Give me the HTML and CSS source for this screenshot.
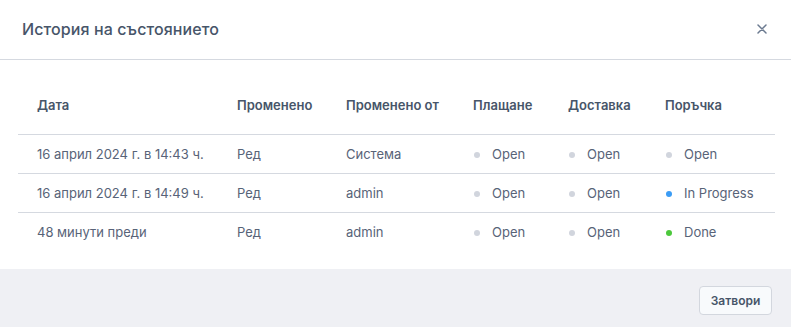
FILE: index.html
```html
<!DOCTYPE html>
<html>
<head>
    <meta charset="UTF-8">
    <title>История на състоянието</title>
    <link rel="stylesheet" href="styles.css">
</head>
<body>
<div class="modal">
    <div class="modal-head">
        <h2 class="modal-title">История на състоянието</h2>
        <button class="close" type="button">
            <svg width="10" height="10" viewBox="0 0 10 10"><path d="M1 1L9 9M9 1L1 9" stroke="#6b7a90" stroke-width="1.5" stroke-linecap="round"/></svg>
        </button>
    </div>
    <div class="modal-body">
        <table class="history">
            <thead>
            <tr>
                <th class="c-date">Дата</th>
                <th class="c-by">Променено</th>
                <th class="c-user">Променено от</th>
                <th class="c-pay">Плащане</th>
                <th class="c-ship">Доставка</th>
                <th class="c-order">Поръчка</th>
            </tr>
            </thead>
            <tbody>
            <tr>
                <td>16 април 2024 г. в 14:43 ч.</td>
                <td>Ред</td>
                <td>Система</td>
                <td><span class="dot"></span>Open</td>
                <td><span class="dot"></span>Open</td>
                <td><span class="dot"></span>Open</td>
            </tr>
            <tr>
                <td>16 април 2024 г. в 14:49 ч.</td>
                <td>Ред</td>
                <td>admin</td>
                <td><span class="dot"></span>Open</td>
                <td><span class="dot"></span>Open</td>
                <td><span class="dot blue"></span>In Progress</td>
            </tr>
            <tr>
                <td>48 минути преди</td>
                <td>Ред</td>
                <td>admin</td>
                <td><span class="dot"></span>Open</td>
                <td><span class="dot"></span>Open</td>
                <td><span class="dot green"></span>Done</td>
            </tr>
            </tbody>
        </table>
    </div>
    <div class="modal-foot">
        <button class="btn" type="button">Затвори</button>
    </div>
</div>
</body>
</html>
```

FILE: styles.css
```css
*{ margin: 0; padding: 0; box-sizing: border-box; }
body{
    font-family: Inter, "Noto Sans", sans-serif;
    background: #fff;
    color: #4b5567;
}
.modal{
    width: 791px;
    height: 327px;
    display: flex;
    flex-direction: column;
}
.modal-head{
    height: 60px;
    display: flex;
    align-items: center;
    justify-content: space-between;
    padding: 0 20px 2px 22px;
    border-bottom: 1px solid #d5d9e0;
}
.modal-title{
    font-size: 16px;
    font-weight: 500;
    color: #475569;
    letter-spacing: 0.1px;
}
.close{
    border: 0;
    background: none;
    width: 10px;
    height: 10px;
    display: flex;
    margin-right: 4px;
}
.modal-body{
    flex: 1;
    padding: 19px 16px 0 18px;
}
.history{
    width: 757px;
    border-collapse: collapse;
    font-size: 13px;
}
.history th{
    text-align: left;
    font-weight: 600;
    color: #475569;
    height: 55px;
    padding: 0 0 2px 19px;
    border-bottom: 1px solid #d5d9e0;
}
.history td{
    height: 39px;
    padding: 0 0 0 19px;
    color: #586378;
    border-bottom: 1px solid #d5d9e0;
    white-space: nowrap;
}
.history tbody tr:last-child td{ border-bottom: 0; }
.c-date{ width: 200px; }
.c-by{ width: 109px; }
.c-user{ width: 127px; }
.c-pay{ width: 95px; }
.c-ship{ width: 97px; }
.dot{
    display: inline-block;
    width: 6px;
    height: 6px;
    border-radius: 50%;
    background: #d1d5dd;
    margin: 0 12px 0 1px;
    vertical-align: 1px;
}
.dot.blue{ background: #3b9cf5; }
.dot.green{ background: #4cc83c; }
.modal-foot{
    height: 58px;
    background: #eff0f4;
    display: flex;
    align-items: center;
    justify-content: flex-end;
    padding: 0 19px 0 0;
}
.btn{
    width: 73px;
    height: 29px;
    border: 1px solid #d3d7de;
    border-radius: 4px;
    background: #f8fafc;
    font-family: Inter, "Noto Sans", sans-serif;
    font-size: 12px;
    font-weight: 600;
    color: #475569;
    margin-top: 4px;
}
```
